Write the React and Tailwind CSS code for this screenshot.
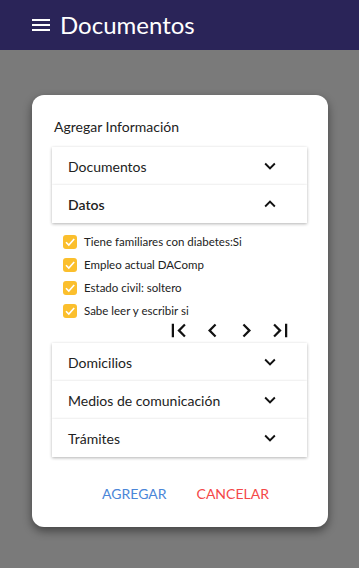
import React from "react";
import { MdMenu, MdExpandMore, MdExpandLess, MdFirstPage, MdLastPage, MdChevronLeft, MdChevronRight } from "react-icons/md";

const font = { fontFamily: "Lato, 'Open Sans', sans-serif" };

function Row({ label, open, bold }) {
  return (
    <div className="h-[38px] flex items-center justify-between pl-4 pr-[26px] bg-white shadow-[0_1px_3px_rgba(0,0,0,0.3)] relative">
      <span className={`text-[14px] text-[#222] ${bold ? "font-semibold" : ""}`}>{label}</span>
      {open ? <MdExpandLess size={22} className="text-[#111]" /> : <MdExpandMore size={22} className="text-[#111]" />}
    </div>
  );
}

function Check({ label }) {
  return (
    <div className="flex items-center h-[23px]">
      <span className="w-[14px] h-[14px] rounded-[3px] bg-[#fbbf2d] flex items-center justify-center">
        <svg width="12" height="12" viewBox="0 0 12 12"><path d="M2 6.2 L4.8 9 L10.2 3" fill="none" stroke="white" strokeWidth="1.6" /></svg>
      </span>
      <span className="ml-[7px] text-[11.5px] text-[#222]">{label}</span>
    </div>
  );
}

export default function App() {
  return (
    <div style={font} className="w-[359px] h-[568px] bg-[#7a7a7a] flex flex-col overflow-hidden">
      <div className="h-[50px] bg-[#2a2458] flex items-center pl-[29px] shrink-0">
        <MdMenu size={24} className="text-white" />
        <span className="ml-[7px] text-white text-[24px] leading-none">Documentos</span>
      </div>
      <div className="pt-[45px] pl-[32px]">
        <div className="w-[296px] h-[432px] bg-white rounded-[12px] shadow-[0_4px_10px_rgba(0,0,0,0.45)] pt-[22px] pl-[20px] pr-[21px]">
          <div className="pl-[2px] text-[14px] text-[#222] leading-[20px]">Agregar Información</div>
          <div className="mt-[10px] flex flex-col">
            <Row label="Documentos" />
            <Row label="Datos" open bold />
            <div className="pl-[11px] pt-[7px]">
              <Check label="Tiene familiares con diabetes:Si" />
              <Check label="Empleo actual DAComp" />
              <Check label="Estado civil: soltero" />
              <Check label="Sabe leer y escribir si" />
              <div className="flex items-center justify-end h-[16px] pr-[13px] text-[#111]">
                <MdFirstPage size={27} />
                <MdChevronLeft size={27} className="ml-[7px]" />
                <MdChevronRight size={27} className="ml-[7px]" />
                <MdLastPage size={27} className="ml-[7px]" />
              </div>
            </div>
            <div className="mt-[5px] flex flex-col">
              <Row label="Domicilios" />
              <Row label="Medios de comunicación" />
              <Row label="Trámites" />
            </div>
          </div>
          <div className="mt-[26px] flex justify-center gap-[30px] text-[14px] pl-[12px]">
            <span className="text-[#4a86d8]">AGREGAR</span>
            <span className="text-[#f44848]">CANCELAR</span>
          </div>
        </div>
      </div>
    </div>
  );
}
